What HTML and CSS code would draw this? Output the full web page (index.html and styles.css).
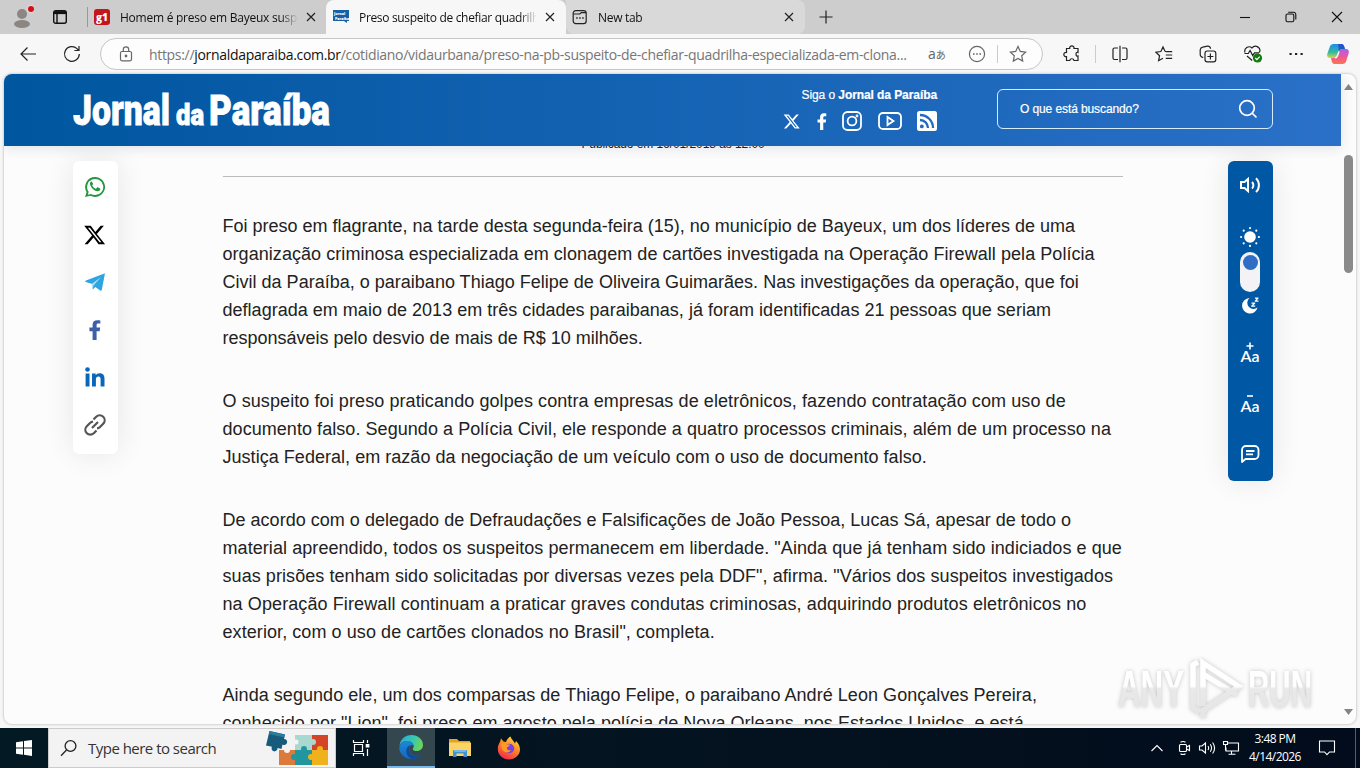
FILE: index.html
```html
<!DOCTYPE html>
<html lang="pt-BR">
<head>
<meta charset="UTF-8" />
<meta name="viewport" content="width=device-width, initial-scale=1" />
<title>Preso suspeito de chefiar quadrilha</title>
<link rel="stylesheet" href="styles.css">
</head>
<body>

<!-- Pestañas -->
<div class="tabbar">
  <svg class="profile" width="24" height="28" viewBox="0 0 24 28"><circle cx="12" cy="11" r="5" fill="#8b8682"/><ellipse cx="12" cy="21" rx="8" ry="4" fill="#8b8682"/><circle cx="21" cy="6" r="4.2" fill="#e3d5d5"/><circle cx="21" cy="6" r="3" fill="#d40f1c"/></svg>
  <svg class="workspaces" width="16" height="16" viewBox="0 0 16 16" fill="none" stroke="#111" stroke-width="1.4"><rect x="1.7" y="1.7" width="12.6" height="12.6" rx="2"/><path d="M2 3.6h12" stroke-width="3"/><path d="M5 4v10"/></svg>
  <div class="tab first">
    <svg width="16" height="16" viewBox="0 0 16 16"><rect width="16" height="16" rx="3" fill="#c4141c"/><text x="2" y="11.5" class="g1">g1</text></svg>
    <span class="tab-title t1">Homem é preso em Bayeux suspeito</span>
    <svg class="close" width="10" height="10" viewBox="0 0 10 10"><path d="M1 1l8 8M9 1l-8 8"/></svg>
  </div>
  <div class="tab active">
    <svg width="16" height="16" viewBox="0 0 16 16"><path d="M0 1h16v11h-2v2l-3-2H0z" fill="#175fa6"/><text x="1" y="6" class="mini">Jornal</text><text x="2" y="10.5" class="mini">Paraíba</text></svg>
    <span class="tab-title t2">Preso suspeito de chefiar quadrilha</span>
    <svg class="close" width="10" height="10" viewBox="0 0 10 10"><path d="M1 1l8 8M9 1l-8 8"/></svg>
  </div>
  <div class="tab third">
    <svg width="16" height="16" viewBox="0 0 16 16" fill="none" stroke="#222" stroke-width="1.2"><rect x="1.2" y="1.6" width="13" height="13" rx="2.6"/><path d="M1.5 5h6.3l1.5-1.4h4.8"/><path d="M4.2 9h1.5M7.2 9h1.5M10.2 9h1.5" stroke-width="1.5"/></svg>
    <span class="tab-title t3">New tab</span>
    <svg class="close" width="10" height="10" viewBox="0 0 10 10"><path d="M1 1l8 8M9 1l-8 8"/></svg>
  </div>
  <svg class="newtab" width="14" height="14" viewBox="0 0 14 14"><path d="M7 .5v13M.5 7h13" stroke="#222" stroke-width="1.2"/></svg>
  <div class="window-buttons">
    <svg width="12" height="12" viewBox="0 0 12 12"><path d="M1 6.500h10"/></svg>
    <svg width="12" height="12" viewBox="0 0 12 12"><rect x="1" y="3" width="7.800" height="7.800" rx="1.500"/><path d="M3.200 1.200h5.300a2.300 2.300 0 0 1 2.300 2.300v5"/></svg>
    <svg width="12" height="12" viewBox="0 0 12 12"><path d="M1 1l10 10M11 1L1 11"/></svg>
  </div>
</div>

<!-- Barra de direcciones -->
<div class="toolbar">
  <svg class="back" width="18" height="16" viewBox="0 0 18 16"><path d="M17 8H2M8.500 1.500L2 8l6.500 6.500"/></svg>
  <svg class="reload" width="18" height="18" viewBox="0 0 18 18"><path d="M16.300 9A7.400 7.400 0 1 1 14 3.600l1.700 1.700M16 1v4.500h-4.600"/></svg>
  <div class="address">
    <svg width="14" height="16" viewBox="0 0 14 16"><rect x="1.500" y="5.500" width="11" height="9.300" rx="1.500"/><path d="M4.300 5.500V3.500a2.700 2.700 0 0 1 5.400 0v2"/><circle cx="7" cy="10" r=".8" fill="#666"/></svg>
    <span class="url">https://<b>jornaldaparaiba.com.br</b>/cotidiano/vidaurbana/preso-na-pb-suspeito-de-chefiar-quadrilha-especializada-em-clona...</span>
    <span class="translate">a<small>あ</small></span>
    <svg class="dots" width="18" height="18" viewBox="0 0 18 18"><circle cx="9" cy="9" r="7.600"/><path d="M5 9h1.600M8.200 9h1.600M11.400 9H13" stroke-width="1.600"/></svg>
    <i class="sep"></i>
    <svg class="star" width="18" height="18" viewBox="0 0 18 18"><path d="M9 1.500l2.300 4.900 5.300.7-3.900 3.700 1 5.300L9 13.500l-4.700 2.600 1-5.300L1.400 7.100l5.300-.7z"/></svg>
  </div>
  <div class="tools">
    <svg width="18" height="18" viewBox="0 0 18 18"><path d="M3.500 3.500h3.200a2.200 2.200 0 1 1 4.300 0h4v4a1.300 1.300 0 0 0-1.800 1.800A1.300 1.300 0 0 0 15 11v4.500h-4a2.200 2.200 0 0 0-4.300 0H3.500v-3.800a2.200 2.200 0 1 1 0-4.300z"/></svg>
    <i class="sep"></i>
    <svg width="18" height="18" viewBox="0 0 18 18"><path d="M7 3H3.500A1.500 1.500 0 0 0 2 4.500v8.500a1.500 1.500 0 0 0 1.500 1.500H7M11 3h3.500A1.500 1.500 0 0 1 16 4.500v8.500a1.500 1.500 0 0 1-1.500 1.500H11M9 .8v16.400"/></svg>
    <svg class="favs" width="18" height="18" viewBox="0 0 18 18"><path d="M10 6.300L8 2 5.900 6.500.9 7.200l3.700 3.500-1 5L8 13.300M11.300 6.700h5.900M10.800 10h6.400M10.800 13.300h6.400M10 6.300l1.300.4"/></svg>
    <svg width="18" height="18" viewBox="0 0 18 18"><rect x="6" y="6" width="10.800" height="10.800" rx="2.300"/><path d="M11.400 8.500v6M8.400 11.500h6M4.300 12.500A3.500 3.500 0 0 1 1.200 9V4.700a3 3 0 0 1 2.500-2.600l4.800-.9a2.500 2.500 0 0 1 3 2.500"/></svg>
    <svg width="20" height="20" viewBox="0 0 20 20"><path d="M2 8.500A4.300 4.300 0 0 1 9 4a4.300 4.300 0 0 1 7.300 4.500M1.500 9.500h3.800l1.800-3 2.600 5 1.800-2.700h4.500M4 12l5.200 4.500"/><circle cx="14.500" cy="14" r="4.600" fill="#107c10" stroke="none"/><path d="M12.300 14l1.600 1.600 2.800-3" stroke="#fff"/></svg>
    <svg class="more" width="18" height="18" viewBox="0 0 18 18"><path d="M2.500 9h2.200M8 9h2.200M13.500 9h2.200" stroke-width="2.200"/></svg>
    <svg width="24" height="24" viewBox="0 0 24 24" stroke="none">
      <defs>
        <linearGradient id="cp1" x1="0" y1="0" x2="0" y2="1"><stop offset="0" stop-color="#1a8ee8"/><stop offset=".6" stop-color="#38b8a0"/><stop offset="1" stop-color="#d7d83a"/></linearGradient>
        <linearGradient id="cp2" x1="0" y1="0" x2="0" y2="1"><stop offset="0" stop-color="#a661e8"/><stop offset=".5" stop-color="#ee559c"/><stop offset="1" stop-color="#f9774a"/></linearGradient>
      </defs>
      <path d="M7.500 2h8c1.500 0 2.200 1 2.700 2.500l.8 2.500h-3c-1.500 0-2.400.8-3 2.500l-1.600 4.500c-.6 1.600-1.500 2-3 2H4C1.500 16 .6 14 1.400 11.500l2.400-6.700C4.500 2.800 5.700 2 7.500 2z" fill="url(#cp1)"/>
      <path d="M16.500 22h-8c-1.500 0-2.200-1-2.700-2.500L5 16h3.400c1.500 0 2.400-.8 3-2.500L13 9.500c.6-1.700 1.500-2.500 3-2.500h4c2.500 0 3.400 2 2.600 4.500l-2.400 7.500c-.7 2.200-1.900 3-3.700 3z" fill="url(#cp2)"/>
      <path d="M12 2h3.500c1.500 0 2.200 1 2.700 2.500L19 7h-3c-1.500 0-2.400.8-3 2.200z" fill="#2555c8"/>
      <path d="M13 9.500l-1.600 4.500c-.5 1.300-1.200 1.900-2.200 2 1.200-.2 1.800-1 2.300-2.500z" fill="#f7f7f7" stroke="#f7f7f7" stroke-width="1.500"/>
    </svg>
  </div>
</div>

<div class="viewport">
  <div class="page">
    <header class="site-header">
      <svg class="logo" width="260" height="40" viewBox="0 0 260 40">
        <text x="0" y="33.500" font-size="43" textLength="97" lengthAdjust="spacingAndGlyphs">Jornal</text>
        <text x="103" y="33.500" font-size="30" textLength="28" lengthAdjust="spacingAndGlyphs">da</text>
        <text x="136" y="33.500" font-size="43" textLength="121" lengthAdjust="spacingAndGlyphs">Paraíba</text>
      </svg>
      <div class="follow">
        <div class="follow-text">Siga o <b>Jornal da Paraíba</b></div>
        <div class="social">
          <svg width="18" height="17" viewBox="0 0 24 24"><path d="M18.200 2h3.500l-7.700 8.800L23 22h-7.100l-5.500-7.200L4 22H.6l8.200-9.400L.2 2h7.200l5 6.600zM17 20h2L6.400 4H4.300z"/></svg>
          <svg width="10" height="17" viewBox="0 0 9 16"><path d="M2.700 16V9H.3V6.200h2.400V4C2.700 1.600 4.100.3 6.300.3c1 0 1.900.1 2.200.2V3H7C5.900 3 5.700 3.600 5.700 4.400v1.800h2.700L8 9H5.700v7z"/></svg>
          <svg class="line" width="20" height="20" viewBox="0 0 20 20"><rect x="1" y="1" width="18" height="18" rx="4.500"/><circle cx="10" cy="10" r="4.400"/><circle cx="15" cy="5" r=".5"/></svg>
          <svg class="line" width="24" height="18" viewBox="0 0 24 18"><rect x="1" y="1" width="22" height="16" rx="4"/><path d="M9.500 5v8l6-4z"/></svg>
          <svg width="20" height="20" viewBox="0 0 20 20"><rect width="20" height="20" rx="2.500"/><g fill="none" stroke="#226abf" stroke-width="2.300"><path d="M3 4a13 13 0 0 1 13 13M3 9a8 8 0 0 1 8 8"/></g><circle cx="4.800" cy="15.400" r="1.900" fill="#226abf"/></svg>
        </div>
      </div>
      <div class="search">
        <span>O que está buscando?</span>
        <svg width="20" height="20" viewBox="0 0 20 20" fill="none" stroke="#fff" stroke-width="1.700"><circle cx="9" cy="9" r="7.300"/><path d="M14 14l4.500 4.500"/></svg>
      </div>
    </header>

    <div class="content">
      <aside class="share">
        <svg width="22" height="22" viewBox="0 0 24 24" fill="#25963f"><path d="M12 1.200A10.700 10.700 0 0 0 2.800 17.400L1.200 23l5.800-1.500A10.800 10.800 0 1 0 12 1.200zm0 19.600c-1.700 0-3.200-.5-4.500-1.300l-3.300.9.900-3.200A8.800 8.800 0 1 1 12 20.800z"/><path d="M8.700 6.500c-.3-.5-.9-.5-1.300-.1-1.200 1.200-1.200 3 .3 5.200 1.700 2.600 4 4.400 6.500 5 1.600.4 3.300-.6 3.600-2.100.1-.5 0-.8-.4-1l-2.300-1.100c-.4-.2-.7 0-1 .4l-.7.9c-.2.2-.5.200-.8.100-1.600-.7-2.800-1.800-3.600-3.200-.2-.3 0-.6.2-.8l.6-.8c.2-.3.1-.6 0-.9z"/></svg>
        <svg width="22" height="22" viewBox="0 0 24 24" fill="#000"><path d="M18.200 2h3.500l-7.700 8.800L23 22h-7.100l-5.500-7.200L4 22H.6l8.200-9.400L.2 2h7.200l5 6.600zM17 20h2L6.400 4H4.300z"/></svg>
        <svg width="20" height="20" viewBox="0 0 20 20"><path d="M20 1.200l-3.200 16.500c-.2 1-.9 1.200-1.700.7L10.300 15l-2.500 2.400-.5-5.300L.8 10c-1-.4-1-1 .2-1.500z" fill="#2ca5e0"/><path d="M6.500 12.200L16 5l-7.500 8.500-.8 4z" fill="#b4dcf2"/></svg>
        <svg width="12" height="22" viewBox="0 0 9 16" fill="#3d5fa8"><path d="M2.700 15.500V9H.3V6.200h2.400V4C2.700 1.600 4.100.6 6.300.6c1 0 1.900.1 2.200.2v2.400H7c-1.100 0-1.300.5-1.300 1.200v1.800h2.700L8 9H5.700v6.500z"/></svg>
        <svg width="20" height="20" viewBox="0 0 20 20" fill="#0a66b8"><circle cx="2.500" cy="2.500" r="2.300"/><path d="M.6 6.500h3.900v13H.6zM7 6.500h3.700v1.800c.7-1.300 2-2.100 4-2.100 3.700 0 4.800 2.300 4.800 5.800v7.500h-3.900v-6.700c0-1.800-.3-3.300-2.200-3.300s-2.500 1.300-2.500 3.200v6.800H7z"/></svg>
        <svg width="24" height="24" viewBox="0 0 24 24" fill="none" stroke="#555" stroke-width="2.200"><path d="M10.500 6.500l2.700-2.700a4.900 4.900 0 0 1 7 7l-3.200 3.200a4.900 4.900 0 0 1-3 1.400M13.500 17.500l-2.700 2.700a4.900 4.900 0 0 1-7-7L7 10a4.900 4.900 0 0 1 3-1.400M9 15l6-6"/></svg>
      </aside>

      <article>
        <div class="published">Publicado em 16/01/2018 às 12:00</div>
        <p>
          <span class="ln">Foi preso em flagrante, na tarde desta segunda-feira (15), no município de Bayeux, um dos líderes de uma</span>
          <span class="ln a2">organização criminosa especializada em clonagem de cartões investigada na Operação Firewall pela Polícia</span>
          <span class="ln a3">Civil da Paraíba, o paraibano Thiago Felipe de Oliveira Guimarães. Nas investigações da operação, que foi</span>
          <span class="ln a4">deflagrada em maio de 2013 em três cidades paraibanas, já foram identificadas 21 pessoas que seriam</span>
          <span class="ln">responsáveis pelo desvio de mais de R$ 10 milhões.</span>
        </p>
        <p>
          <span class="ln b1">O suspeito foi preso praticando golpes contra empresas de eletrônicos, fazendo contratação com uso de</span>
          <span class="ln b2">documento falso. Segundo a Polícia Civil, ele responde a quatro processos criminais, além de um processo na</span>
          <span class="ln b3">Justiça Federal, em razão da negociação de um veículo com o uso de documento falso.</span>
        </p>
        <p>
          <span class="ln c1">De acordo com o delegado de Defraudações e Falsificações de João Pessoa, Lucas Sá, apesar de todo o</span>
          <span class="ln c2">material apreendido, todos os suspeitos permanecem em liberdade. "Ainda que já tenham sido indiciados e que</span>
          <span class="ln c3">suas prisões tenham sido solicitadas por diversas vezes pela DDF", afirma. "Vários dos suspeitos investigados</span>
          <span class="ln c4">na Operação Firewall continuam a praticar graves condutas criminosas, adquirindo produtos eletrônicos no</span>
          <span class="ln c5">exterior, com o uso de cartões clonados no Brasil", completa.</span>
        </p>
        <p>
          <span class="ln d1">Ainda segundo ele, um dos comparsas de Thiago Felipe, o paraibano André Leon Gonçalves Pereira,</span>
          <span class="ln d2">conhecido por "Lion", foi preso em agosto pela polícia de Nova Orleans, nos Estados Unidos, e está</span>
        </p>
      </article>

      <aside class="access">
        <svg class="sound" width="22" height="18" viewBox="0 0 22 18" fill="none" stroke="#fff" stroke-width="2"><path d="M2 6h3.500L9 3v12l-3.500-3H2zM13 6a4.500 4.500 0 0 1 0 6.500M17 2.300a9.500 9.500 0 0 1 0 13.700"/></svg>
        <div class="theme">
          <svg width="20" height="20" viewBox="0 0 20 20" fill="#fff"><circle cx="10" cy="10" r="5.800"/><circle cx="10" cy="1.100" r="1.100"/><circle cx="10" cy="18.900" r="1.100"/><circle cx="1.100" cy="10" r="1.100"/><circle cx="18.900" cy="10" r="1.100"/><circle cx="3.700" cy="3.700" r="1.100"/><circle cx="16.300" cy="3.700" r="1.100"/><circle cx="3.700" cy="16.300" r="1.100"/><circle cx="16.300" cy="16.300" r="1.100"/></svg>
          <div class="switch"><i></i></div>
          <svg width="18" height="18" viewBox="0 0 18 18" fill="#fff"><path d="M8.500 2a7.800 7.800 0 1 0 8 9.500A6 6 0 0 1 8.500 2z"/><path d="M10.500 6.500h3.700v1l-2 2h2v1.200h-4v-1l2-2h-1.700zM14 1.500h3.500v1l-1.800 2h1.800v1.200h-3.700v-1l1.800-2H14z"/></svg>
        </div>
        <div class="font-size"><svg width="8" height="8" viewBox="0 0 8 8"><path d="M4 .5v7M.5 4h7"/></svg><b>Aa</b></div>
        <div class="font-size minus"><svg width="8" height="8" viewBox="0 0 8 8"><path d="M1 4h6"/></svg><b>Aa</b></div>
        <svg class="comment" width="20" height="20" viewBox="0 0 20 20" fill="none" stroke="#fff" stroke-width="1.800"><path d="M2 18V6a4 4 0 0 1 4-4h8.500a4 4 0 0 1 4 4v5a4 4 0 0 1-4 4H5.500z" stroke-linejoin="round"/><path d="M6 7h8.500M6 10.300h7"/></svg>
      </aside>
    </div>
  </div>

  <div class="scrollbar">
    <svg width="9" height="6" viewBox="0 0 9 6"><path d="M4.500 0L9 6H0z" fill="#858585"/></svg>
    <div class="thumb"></div>
    <svg width="9" height="6" viewBox="0 0 9 6"><path d="M4.500 6L9 0H0z" fill="#858585"/></svg>
  </div>
</div>

<!-- Marca de agua -->
<svg class="watermark" width="206" height="72" viewBox="0 0 206 72">
  <defs><linearGradient id="wm" gradientUnits="userSpaceOnUse" x1="0" y1="14" x2="0" y2="56"><stop offset="0" stop-color="#fff"/><stop offset=".46" stop-color="#fefefe"/><stop offset=".52" stop-color="#e9e9e9"/><stop offset="1" stop-color="#e6e6e6"/></linearGradient></defs>
  <text x="4" y="53.500" textLength="66" lengthAdjust="spacingAndGlyphs">ANY</text>
  <text x="134" y="53.500" textLength="64" lengthAdjust="spacingAndGlyphs">RUN</text>
  <g fill="none" stroke="url(#wm)" stroke-width="5.500">
    <path d="M89 53V10l36 23.500-36 24v7.500"/>
    <path d="M89 21l34 21"/>
    <path d="M84 9l-5 3v43l7 4"/>
  </g>
</svg>

<!-- Barra de tareas -->
<div class="taskbar">
  <div class="start"><svg width="16" height="16" viewBox="0 0 16 16" fill="#fff"><path d="M0 2.300l7-1v6.300H0zM8 1.100L16 0v7.600H8zM0 8.500h7v6.300l-7-1zM8 8.500h8V16l-8-1.200z"/></svg></div>
  <div class="tb-search">
    <svg width="18" height="18" viewBox="0 0 18 18" fill="none" stroke="#222" stroke-width="1.300"><circle cx="10.500" cy="7" r="5.400"/><path d="M6.500 11L1 16.700"/></svg>
    <span>Type here to search</span>
    <svg class="puzzle" width="64" height="36" viewBox="0 0 64 36">
      <path d="M14 20h16v15H14z" fill="#dc7a3b"/><path d="M30 5h17v15H30z" fill="#a8d8cf"/><path d="M47 5h16v15H47z" fill="#d44527"/><path d="M30 20h17v15H30z" fill="#22969e"/><path d="M47 20h16v15H47z" fill="#efb21b"/>
      <circle cx="22" cy="20" r="3" fill="#f3f3f3"/><circle cx="29" cy="27" r="3" fill="#22969e"/><circle cx="39" cy="19" r="3" fill="#22969e"/><circle cx="48" cy="12" r="3" fill="#a8d8cf"/><circle cx="46" cy="27" r="3" fill="#efb21b"/><circle cx="55" cy="19" r="3" fill="#efb21b"/><circle cx="31" cy="12" r="2.500" fill="#f3f3f3"/>
      <path d="M4.500 1L20 4.500 19 9a3 3 0 1 1-1.500 5.500L16.500 19l-4-1a3 3 0 1 1-5.500-1.200L1 15.500z" fill="#175b7c"/><path d="M4.500 1L20 4.500l-.8 3L3.800 4z" fill="#2c7b9c"/>
    </svg>
  </div>
  <div class="app"><svg width="18" height="18" viewBox="0 0 18 18" fill="none" stroke="#fff" stroke-width="1.200"><path d="M1.500 1v2.500h10V1M1.500 17v-2.500h10V17M2.500 5.500h8v7h-8zM15.500 1v3M15.500 10v7"/><path d="M14.300 5.500h2.500V8h-2.500z" fill="#fff"/></svg></div>
  <div class="app current"><svg width="26" height="26" viewBox="0 0 26 26">
    <defs>
      <linearGradient id="ed1" x1="0" y1="0" x2="1" y2=".3"><stop offset="0" stop-color="#2aa7e0"/><stop offset=".6" stop-color="#35c7b4"/><stop offset="1" stop-color="#68d45c"/></linearGradient>
      <linearGradient id="ed2" x1="0" y1="0" x2="0" y2="1"><stop offset="0" stop-color="#1b8ad6"/><stop offset="1" stop-color="#1367c0"/></linearGradient>
    </defs>
    <path d="M1.500 12C2 5.500 7 1 13.500 1 20 1 25 5.500 25 11c0 3.500-2.700 6-6 6-2.700 0-4.300-1-4.300-1.800 0-.6 1-1.200 1-2.900C15.700 9.500 12.700 7 9.500 7 5.500 7 2.500 9 1.500 12z" fill="url(#ed1)"/>
    <path d="M1.300 13.500C2 9.500 5.500 7 9.500 7c3 0 6 2 6.100 5-1-.8-2-1.200-2.800-.8-2.500 1.200-3.300 9 5 10.300 2.300.3 4.200-.5 5.600-1.500C21.500 23.200 17.700 25.200 13.500 25 6.500 24.900 1 19.500 1.300 13.500z" fill="url(#ed2)"/>
    <path d="M9.800 12.500c-3 4-1.300 10.500 4.200 12.500 4 0 7.600-2.100 9.400-5-6 3.500-12.600.5-12.400-5 0-1 .2-2.200 1-3.400-.8 0-1.600.3-2.200.9z" fill="#124b94"/>
  </svg></div>
  <div class="app"><svg width="22" height="20" viewBox="0 0 22 20"><path d="M0 1h8l2 2h11v4H0z" fill="#e2a326"/><path d="M0 4.500h22V18H0z" fill="#fbd464"/><path d="M4 19v-7h14v7h-3.500v-3.500h-7V19z" fill="#4393d3"/><path d="M4 12h14l-2 2H6z" fill="#73b9eb"/></svg></div>
  <div class="app"><svg width="24" height="24" viewBox="0 0 24 24">
    <defs><linearGradient id="ff" x1=".8" y1="0" x2=".3" y2="1"><stop offset="0" stop-color="#ffe04a"/><stop offset=".45" stop-color="#ff8a24"/><stop offset="1" stop-color="#f0294d"/></linearGradient></defs>
    <path d="M3 6l1-3.500L6.500 5.500 9 6c.8-2.500 2.500-4.700 4.500-5.500C14 3 17 5 18 7.500L19 5c2.700 2.500 4 5.500 4 8.500C23 19 18 23.500 12 23.500S.8 19 .8 13C.8 10 2 7.500 3 6z" fill="url(#ff)"/>
    <circle cx="12.500" cy="12.500" r="4.700" fill="#7a3fe0"/><path d="M4 8c2.500-2 5-1 6 .5h3c-.5 2-2.500 2-3 3-.3 2.500 1.500 3.300 4 2.500-1 3-7 3.500-9-1z" fill="#ff9a26"/>
  </svg></div>
  <div class="tray">
    <svg width="14" height="14" viewBox="0 0 14 14"><path d="M1.500 10L7 4.500 12.500 10"/></svg>
    <svg width="14" height="16" viewBox="0 0 14 16"><rect x="2.500" y="4.500" width="7" height="7" rx="1"/><path d="M9.500 7l3-1.500v5L9.500 9M3.500 2.300Q6 .8 8.500 2.300M3.500 13.700Q6 15.200 8.500 13.700"/></svg>
    <svg width="18" height="16" viewBox="0 0 18 16"><path d="M1.500 6v4h2.500l3.500 3V3L4 6zM10 6q1.300 2 0 4M12.300 4.300q2.500 3.700 0 7.400M14.600 2.500q4 5.500 0 11"/></svg>
    <svg width="18" height="16" viewBox="0 0 18 16"><path d="M6 3h10.500v8H4V7.500M9.500 11v3M6.500 14.300h7M1.500 1.500h4v3h-4zM3.500 4.500v6"/></svg>
    <div class="clock"><span>3:48 PM</span><span>4/14/2026</span></div>
    <svg class="notice" width="18" height="18" viewBox="0 0 18 18"><path d="M1.500 2h15v11h-5L9 15.700 6.500 13h-5z"/></svg>
    <i class="desktop-line"></i>
  </div>
</div>

</body>
</html>
```

FILE: styles.css
```css
* {
  box-sizing: border-box;
}
body {
  margin: 0;
  width: 1360px;
  height: 768px;
  overflow: hidden;
  display: flex;
  flex-direction: column;
  background: #f7f7f7;
  font-family: "Open Sans", "Noto Sans", "Noto Sans CJK JP", sans-serif;
  color: #222;
}
svg {
  flex: none;
  display: block;
}
/* pestañas */
.tabbar {
  height: 34px;
  flex: none;
  display: flex;
  align-items: center;
  background: #cdcdcd;
}
.profile {
  margin-left: 10px;
}
.workspaces {
  margin-left: 18px;
}
.tab {
  height: 34px;
  display: flex;
  align-items: center;
  font-size: 12px;
  color: #111;
}
.tab.first {
  width: 240px;
  margin-left: 19px;
  padding-left: 7px;
  background: linear-gradient(#999, #999) 0 50% / 1px 20px no-repeat;
}
.tab.active {
  width: 240px;
  margin-left: -1px;
  padding-left: 7px;
  background: #f7f7f7;
  border-radius: 8px 8px 0 0;
}
.tab.third {
  width: 239px;
  padding-left: 6px;
  background: #d9d9d9;
  border-radius: 0 8px 8px 8px;
}
.tab-title {
  margin-left: 10px;
  width: 178px;
  overflow: hidden;
  white-space: nowrap;
  -webkit-mask-image: linear-gradient(90deg, #000 90%, transparent);
  mask-image: linear-gradient(90deg, #000 90%, transparent);
}
.t1 {
  letter-spacing: -0.25px;
}
.t2 {
  letter-spacing: -0.33px;
}
.t3 {
  letter-spacing: -0.3px;
}
.close {
  margin-left: 8px;
  stroke: #222;
  stroke-width: 1.2;
}
.g1 {
  font: 800 10px "Open Sans", sans-serif;
  fill: #fff;
}
.mini {
  font: 800 3.6px "Open Sans", sans-serif;
  fill: #fff;
}
.newtab {
  margin-left: 14px;
}
.window-buttons {
  margin-left: auto;
  padding-right: 17px;
  display: flex;
  gap: 34px;
}
.window-buttons svg {
  fill: none;
  stroke: #111;
  stroke-width: 1.1;
}
/* barra de direcciones */
.toolbar {
  height: 40px;
  flex: none;
  display: flex;
  align-items: center;
}
.toolbar svg {
  fill: none;
  stroke: #222;
  stroke-width: 1.2;
}
.toolbar .tools svg:last-child {
  stroke: none;
}
.back {
  margin-left: 19px;
}
.reload {
  margin-left: 26px;
}
.address {
  width: 943px;
  height: 32px;
  margin-left: 19px;
  padding-left: 18px;
  display: flex;
  align-items: center;
  background: #fdfdfd;
  border: 1px solid #c6c6c6;
  border-radius: 16px;
}
.toolbar .address svg {
  stroke: #666;
}
.url {
  width: 761px;
  margin-left: 16px;
  white-space: nowrap;
  font-size: 14px;
  letter-spacing: -0.315px;
  color: #767676;
}
.url b {
  font-weight: 400;
  color: #111;
}
.translate {
  width: 18px;
  margin-left: 18px;
  font-size: 14px;
  line-height: 18px;
  color: #666;
  white-space: nowrap;
}
.translate small {
  font-size: 10px;
}
.dots {
  margin-left: 22px;
}
.sep {
  width: 1px;
  height: 18px;
  background: #ccc;
}
.address .sep {
  margin-left: 11px;
}
.star {
  margin-left: 11px;
}
.tools {
  display: flex;
  align-items: center;
  margin-left: 20px;
}
.tools .sep {
  margin: 0 15px 0 14px;
}
.tools svg + svg {
  margin-left: 26px;
}
.toolbar .tools .more {
  margin-left: 24px;
  fill: #222;
}
.toolbar .tools svg:last-child {
  margin-left: 21px;
}
/* ventana de la página */
.viewport {
  width: 1352px;
  height: 650px;
  flex: none;
  margin-left: 4px;
  display: flex;
  overflow: hidden;
  background: #fcfcfc;
  border-radius: 8px;
  box-shadow: 0 0 3px rgb(0 0 0 / 0.3);
}
.page {
  width: 1337px;
  display: flex;
  flex-direction: column;
  font-family: "Liberation Sans", Arial, sans-serif;
}
.site-header {
  height: 72px;
  flex: none;
  display: flex;
  padding-left: 69px;
  background: linear-gradient(90deg, #00569f, #2a70c8);
  color: #fff;
  box-shadow: 0 2px 12px rgb(0 40 90 / 0.12);
  position: relative;
}
.logo {
  margin-top: 17px;
  fill: #fff;
  stroke: #fff;
  stroke-width: 0.8;
  font-family: Roboto, sans-serif;
  font-weight: 900;
}
.follow {
  width: 154px;
  margin-left: 450px;
}
.follow-text {
  margin-top: 14px;
  text-align: right;
  font-size: 12px;
  line-height: 14px;
  letter-spacing: -0.08px;
  -webkit-text-stroke: 0.2px #fff;
}
.social {
  margin-top: 9px;
  height: 20px;
  display: flex;
  align-items: center;
  justify-content: space-between;
}
.social svg {
  fill: #fff;
}
.social .line {
  fill: none;
  stroke: #fff;
  stroke-width: 1.8;
}
.search {
  width: 276px;
  height: 40px;
  margin: 15px 0 0 60px;
  padding: 0 14px 0 22px;
  display: flex;
  align-items: center;
  justify-content: space-between;
  border: 1px solid #d8ecff;
  border-radius: 6px;
  font-size: 12px;
  letter-spacing: -0.1px;
  -webkit-text-stroke: 0.2px #fff;
}
.content {
  flex: 1;
  min-height: 0;
  display: flex;
  align-items: flex-start;
  overflow: hidden;
  padding-left: 69px;
}
.share {
  width: 45px;
  height: 293px;
  flex: none;
  margin-top: 15px;
  padding: 15px 1px 17px 0;
  display: flex;
  flex-direction: column;
  align-items: center;
  justify-content: space-between;
  background: #fff;
  border-radius: 6px;
  box-shadow: 0 0 30px rgb(0 0 0 / 0.09);
}
article {
  width: 900px;
  flex: none;
  margin-left: 105px;
  font-size: 18px;
  line-height: 28px;
  color: #222;
}
.published {
  height: 40px;
  margin-bottom: 35px;
  border-bottom: 1px solid #bbb;
  text-align: center;
  font-size: 12px;
  line-height: 14px;
  letter-spacing: -0.07px;
}
.published::before {
  content: "";
  display: block;
  margin-top: -9px;
}
article p {
  margin: 0 0 35px;
}
/* ajuste fino del ancho de cada línea */
.ln {
  display: block;
  white-space: nowrap;
  margin-left: -0.5px;
}
.a2 { letter-spacing: 0.055px; }
.a3 { letter-spacing: 0.01px; }
.a4 { letter-spacing: 0.02px; }
.b1 { letter-spacing: 0.087px; }
.b2 { letter-spacing: 0.056px; }
.b3 { letter-spacing: 0.035px; }
.c1 { letter-spacing: 0.02px; }
.c2 { letter-spacing: 0.07px; }
.c3 { letter-spacing: 0.068px; }
.c4 { letter-spacing: 0.1px; }
.c5 { letter-spacing: 0.075px; }
.d1 { letter-spacing: 0.045px; }
.d2 { letter-spacing: 0.03px; }
.access {
  width: 45px;
  height: 320px;
  flex: none;
  margin: 15px 0 0 105px;
  padding: 15px 1px 0 0;
  display: flex;
  flex-direction: column;
  align-items: center;
  background: #0057a3;
  border-radius: 6px;
  color: #fff;
  box-shadow: 0 0 30px rgb(0 0 0 / 0.09);
}
.theme {
  margin-top: 33px;
  display: flex;
  flex-direction: column;
  align-items: center;
  gap: 5px;
}
.theme svg:last-child {
  margin-top: -1px;
}
.switch {
  width: 20px;
  height: 40px;
  padding: 3px 2.500px;
  background: #f3f3f6;
  border-radius: 10px;
}
.switch i {
  display: block;
  width: 15px;
  height: 15px;
  background: #2f6ec4;
  border-radius: 50%;
}
.font-size {
  margin-top: 28px;
  height: 22px;
  display: flex;
  flex-direction: column;
  align-items: center;
  font-family: Lato, sans-serif;
}
.font-size svg {
  fill: none;
  stroke: #fff;
  stroke-width: 1.6;
}
.font-size b {
  font-size: 16px;
  line-height: 12px;
  font-weight: 600;
}
.comment {
  margin-top: 30px;
}
.scrollbar {
  width: 15px;
  padding: 10px 0 9px;
  display: flex;
  flex-direction: column;
  align-items: center;
}
.thumb {
  width: 9px;
  height: 118px;
  margin: 65px 0 auto;
  background: #8a8a8a;
  border-radius: 5px;
}
.watermark {
  position: absolute;
  left: 1114px;
  top: 653px;
  fill: url(#wm);
  font-family: "Liberation Sans", Arial, sans-serif;
  font-weight: 700;
  font-size: 51px;
  filter: drop-shadow(0 0 2px rgb(0 0 0 / 0.22));
}
/* barra de tareas */
.taskbar {
  height: 40px;
  flex: none;
  margin-top: 4px;
  display: flex;
  background: linear-gradient(90deg, #021a24, #04121f 55%, #020c1c);
}
.start {
  width: 48px;
  display: flex;
  align-items: center;
  justify-content: center;
}
.tb-search {
  width: 288px;
  display: flex;
  align-items: center;
  padding-left: 11px;
  background: #f3f3f3;
  border: 1px solid #ccc;
  font-size: 15px;
  letter-spacing: -0.52px;
  color: #333;
}
.tb-search span {
  width: 168px;
  margin-left: 10px;
}
.puzzle {
  margin-left: 9px;
}
.app {
  width: 48px;
  display: flex;
  align-items: center;
  justify-content: center;
  margin-left: 1px;
}
.app.current {
  margin-left: 2px;
  background: #34474f;
  border-bottom: 2px solid #76b9ed;
}
.tray {
  margin-left: auto;
  display: flex;
  align-items: center;
}
.tray svg {
  fill: none;
  stroke: #fff;
  stroke-width: 1.1;
  margin-right: 9px;
}
.tray svg:nth-child(2) {
  margin: 0 7px 0 4px;
}
.tray svg:nth-child(3) {
  margin-right: 6px;
}
.tray svg:nth-child(4) {
  margin-right: 7px;
}
.clock {
  width: 56px;
  display: flex;
  flex-direction: column;
  align-items: center;
  font-size: 12px;
  line-height: 18px;
  letter-spacing: -0.55px;
  color: #fff;
}
.tray .notice {
  margin: 0 19px 0 15px;
}
.desktop-line {
  width: 5px;
  height: 40px;
  border-left: 1px solid #52606b;
}
```
